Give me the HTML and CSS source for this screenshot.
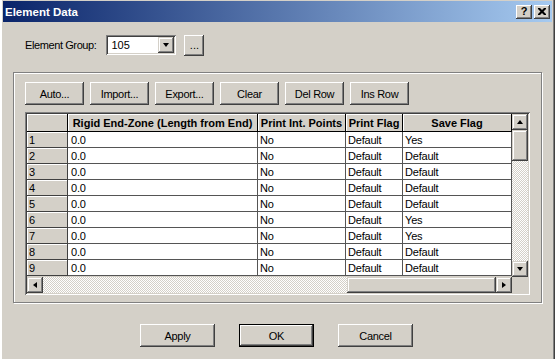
FILE: index.html
```html
<!DOCTYPE html>
<html lang="en">
<head>
  <meta charset="UTF-8">
  <meta name="viewport" content="width=device-width, initial-scale=1.0">
  <title>Element Data</title>
  <link rel="stylesheet" href="styles.css">
</head>
<body>
  <div class="window">
    <div class="titlebar">
      <span class="title">Element Data</span>
      <div class="title-buttons">
        <button class="tbtn help">?</button>
        <button class="tbtn close">
          <svg width="8" height="7" viewBox="0 0 8 7"><path d="M0 0h2l2 2 2-2h2v1L5.5 3.5 8 6v1H6L4 5 2 7H0V6l2.5-2.5L0 1z" fill="#000"/></svg>
        </button>
      </div>
    </div>

    <div class="content">
      <div class="group-row">
        <label class="group-label">Element Group:</label>
        <div class="combo">
          <span class="combo-value">105</span>
          <span class="combo-btn"><span class="arrow arrow-down"></span></span>
        </div>
        <button class="btn btn-dots">...</button>
      </div>

      <div class="groupbox">
        <div class="toolbar">
          <button class="btn tool">Auto...</button>
          <button class="btn tool">Import...</button>
          <button class="btn tool">Export...</button>
          <button class="btn tool">Clear</button>
          <button class="btn tool">Del Row</button>
          <button class="btn tool">Ins Row</button>
        </div>

        <div class="grid-frame">
          <table class="grid">
            <colgroup>
              <col style="width:41px">
              <col style="width:190px">
              <col style="width:88px">
              <col style="width:57px">
              <col style="width:109px">
            </colgroup>
            <thead>
              <tr>
                <th class="corner"></th>
                <th>Rigid End-Zone (Length from End)</th>
                <th>Print Int. Points</th>
                <th>Print Flag</th>
                <th>Save Flag</th>
              </tr>
            </thead>
            <tbody>
              <tr><td class="rowhead">1</td><td>0.0</td><td>No</td><td>Default</td><td>Yes</td></tr>
              <tr><td class="rowhead">2</td><td>0.0</td><td>No</td><td>Default</td><td>Default</td></tr>
              <tr><td class="rowhead">3</td><td>0.0</td><td>No</td><td>Default</td><td>Default</td></tr>
              <tr><td class="rowhead">4</td><td>0.0</td><td>No</td><td>Default</td><td>Default</td></tr>
              <tr><td class="rowhead">5</td><td>0.0</td><td>No</td><td>Default</td><td>Default</td></tr>
              <tr><td class="rowhead">6</td><td>0.0</td><td>No</td><td>Default</td><td>Yes</td></tr>
              <tr><td class="rowhead">7</td><td>0.0</td><td>No</td><td>Default</td><td>Yes</td></tr>
              <tr><td class="rowhead">8</td><td>0.0</td><td>No</td><td>Default</td><td>Default</td></tr>
              <tr><td class="rowhead">9</td><td>0.0</td><td>No</td><td>Default</td><td>Default</td></tr>
            </tbody>
          </table>

          <div class="vscroll">
            <span class="sbtn"><span class="arrow arrow-up"></span></span>
            <span class="vthumb"></span>
            <span class="track"></span>
            <span class="sbtn"><span class="arrow arrow-down"></span></span>
          </div>

          <div class="hscroll">
            <span class="sbtn"><span class="arrow arrow-left"></span></span>
            <span class="track htrack"><span class="hthumb"></span></span>
            <span class="sbtn"><span class="arrow arrow-right"></span></span>
          </div>

          <div class="sizebox"></div>
        </div>
      </div>

      <div class="footer">
        <button class="btn dlg">Apply</button>
        <button class="btn dlg default">OK</button>
        <button class="btn dlg">Cancel</button>
      </div>
    </div>
  </div>
</body>
</html>
```

FILE: styles.css
```css
* {
  box-sizing: border-box;
}

body {
  margin: 0;
  font-family: "Liberation Sans", Arial, sans-serif;
  font-size: 11px;
  color: #000;
  background-color: #D4D0C8;
}

.window {
  width: 555px;
  height: 359px;
  overflow: hidden;
  padding: 1px 3px 0 3px;
  background-color: #D4D0C8;
  box-shadow: inset 2px 0 #FFFFFF, inset -1px 0 #404040, inset -2px 0 #808080;
}

/* title bar */
.titlebar {
  display: flex;
  align-items: center;
  justify-content: space-between;
  height: 21px;
  padding: 0 2px 0 2px;
  background: linear-gradient(to right, #0A246A, #A6CAF0);
}

.title {
  color: #FFFFFF;
  font-weight: bold;
  font-size: 11.5px;
}

.title-buttons {
  display: flex;
  gap: 2px;
}

.tbtn {
  width: 16px;
  height: 14px;
  padding: 0;
  border: none;
  display: flex;
  align-items: center;
  justify-content: center;
  background-color: #D4D0C8;
  font-family: "Liberation Sans", Arial, sans-serif;
  font-weight: bold;
  font-size: 11px;
  line-height: 1;
  box-shadow: inset -1px -1px #404040, inset 1px 1px #FFFFFF, inset -2px -2px #808080;
}

/* generic push button */
.btn {
  padding: 0;
  border: none;
  background-color: #D4D0C8;
  font-family: "Liberation Sans", Arial, sans-serif;
  font-size: 11px;
  letter-spacing: -0.3px;
  color: #000;
  box-shadow: inset -1px -1px #404040, inset 1px 1px #FFFFFF, inset -2px -2px #808080;
}

.content {
  padding: 13px 10px 0 10px;
}

.group-row {
  display: flex;
  align-items: center;
  height: 20px;
  padding-left: 12px;
}

.group-label {
  letter-spacing: -0.4px;
  margin-right: 10px;
}

.combo {
  display: flex;
  align-items: center;
  justify-content: space-between;
  width: 70px;
  height: 20px;
  padding: 2px;
  background-color: #FFFFFF;
  box-shadow: inset 1px 1px #808080, inset -1px -1px #FFFFFF, inset 2px 2px #404040, inset -2px -2px #D4D0C8;
}

.combo-value {
  padding-left: 3px;
}

.combo-btn {
  width: 16px;
  height: 16px;
  display: flex;
  align-items: center;
  justify-content: center;
  background-color: #D4D0C8;
  box-shadow: inset -1px -1px #404040, inset 1px 1px #D4D0C8, inset -2px -2px #808080, inset 2px 2px #FFFFFF;
}

.btn-dots {
  width: 20px;
  height: 21px;
  margin-left: 8px;
  letter-spacing: 0;
}

/* group box */
.groupbox {
  margin-top: 17px;
  padding: 9px 11px 7px 11px;
  border: 1px solid #808080;
  box-shadow: inset 1px 1px #FFFFFF, 1px 1px #FFFFFF;
}

.toolbar {
  display: flex;
  gap: 6px;
}

.tool {
  width: 59px;
  height: 23px;
}

/* grid */
.grid-frame {
  display: grid;
  grid-template-columns: 485px 16px;
  grid-template-rows: 163px 16px;
  margin-top: 7px;
  width: 505px;
  padding: 2px;
  background-color: #D4D0C8;
  box-shadow: inset 1px 1px #808080, inset -1px -1px #FFFFFF, inset 2px 2px #404040, inset -2px -2px #D4D0C8;
}

.grid {
  width: 485px;
  table-layout: fixed;
  border-collapse: separate;
  border-spacing: 0;
  background-color: #FFFFFF;
  align-self: start;
}

.grid th,
.grid td {
  padding: 0 2px;
  overflow: hidden;
  white-space: nowrap;
  border-right: 1px solid #555555;
  border-bottom: 1px solid #555555;
}

.grid th {
  height: 18px;
  text-align: center;
  font-weight: bold;
  background-color: #D4D0C8;
  border-color: #000000;
  box-shadow: inset 1px 1px #FFFFFF;
}

.grid td {
  height: 16px;
  line-height: 14px;
  text-align: left;
  letter-spacing: -0.2px;
}

.grid td:nth-child(2) {
  padding-left: 3px;
}

.grid td.rowhead {
  background-color: #D4D0C8;
  border-color: #404040;
  box-shadow: inset 1px 1px #FFFFFF;
}

.vscroll {
  display: flex;
  flex-direction: column;
}

.hscroll {
  display: flex;
}

.sbtn {
  flex: none;
  width: 16px;
  height: 16px;
  display: flex;
  align-items: center;
  justify-content: center;
  background-color: #D4D0C8;
  box-shadow: inset -1px -1px #404040, inset 1px 1px #D4D0C8, inset -2px -2px #808080, inset 2px 2px #FFFFFF;
}

.track {
  flex: 1;
  background-image: repeating-conic-gradient(#FFFFFF 0 25%, #D4D0C8 0 50%);
  background-size: 2px 2px;
}

.htrack {
  display: flex;
  justify-content: flex-end;
}

.vthumb {
  flex: none;
  height: 31px;
  background-color: #D4D0C8;
  box-shadow: inset -1px -1px #404040, inset 1px 1px #D4D0C8, inset -2px -2px #808080, inset 2px 2px #FFFFFF;
}

.hthumb {
  width: 149px;
  height: 16px;
  background-color: #D4D0C8;
  box-shadow: inset -1px -1px #404040, inset 1px 1px #D4D0C8, inset -2px -2px #808080, inset 2px 2px #FFFFFF;
}

.sizebox {
  background-color: #D4D0C8;
}

/* arrows */
.arrow {
  width: 0;
  height: 0;
  border-style: solid;
  border-color: transparent;
}

.arrow-up {
  border-width: 0 3.5px 4px 3.5px;
  border-bottom-color: #000;
}

.arrow-down {
  border-width: 4px 3.5px 0 3.5px;
  border-top-color: #000;
}

.arrow-left {
  border-width: 3.5px 4px 3.5px 0;
  border-right-color: #000;
}

.arrow-right {
  border-width: 3.5px 0 3.5px 4px;
  border-left-color: #000;
}

/* dialog buttons */
.footer {
  display: flex;
  justify-content: center;
  gap: 24px;
  margin-top: 21px;
  padding-right: 2px;
}

.dlg {
  width: 75px;
  height: 23px;
}

.dlg.default {
  border: 1px solid #000000;
}
```
